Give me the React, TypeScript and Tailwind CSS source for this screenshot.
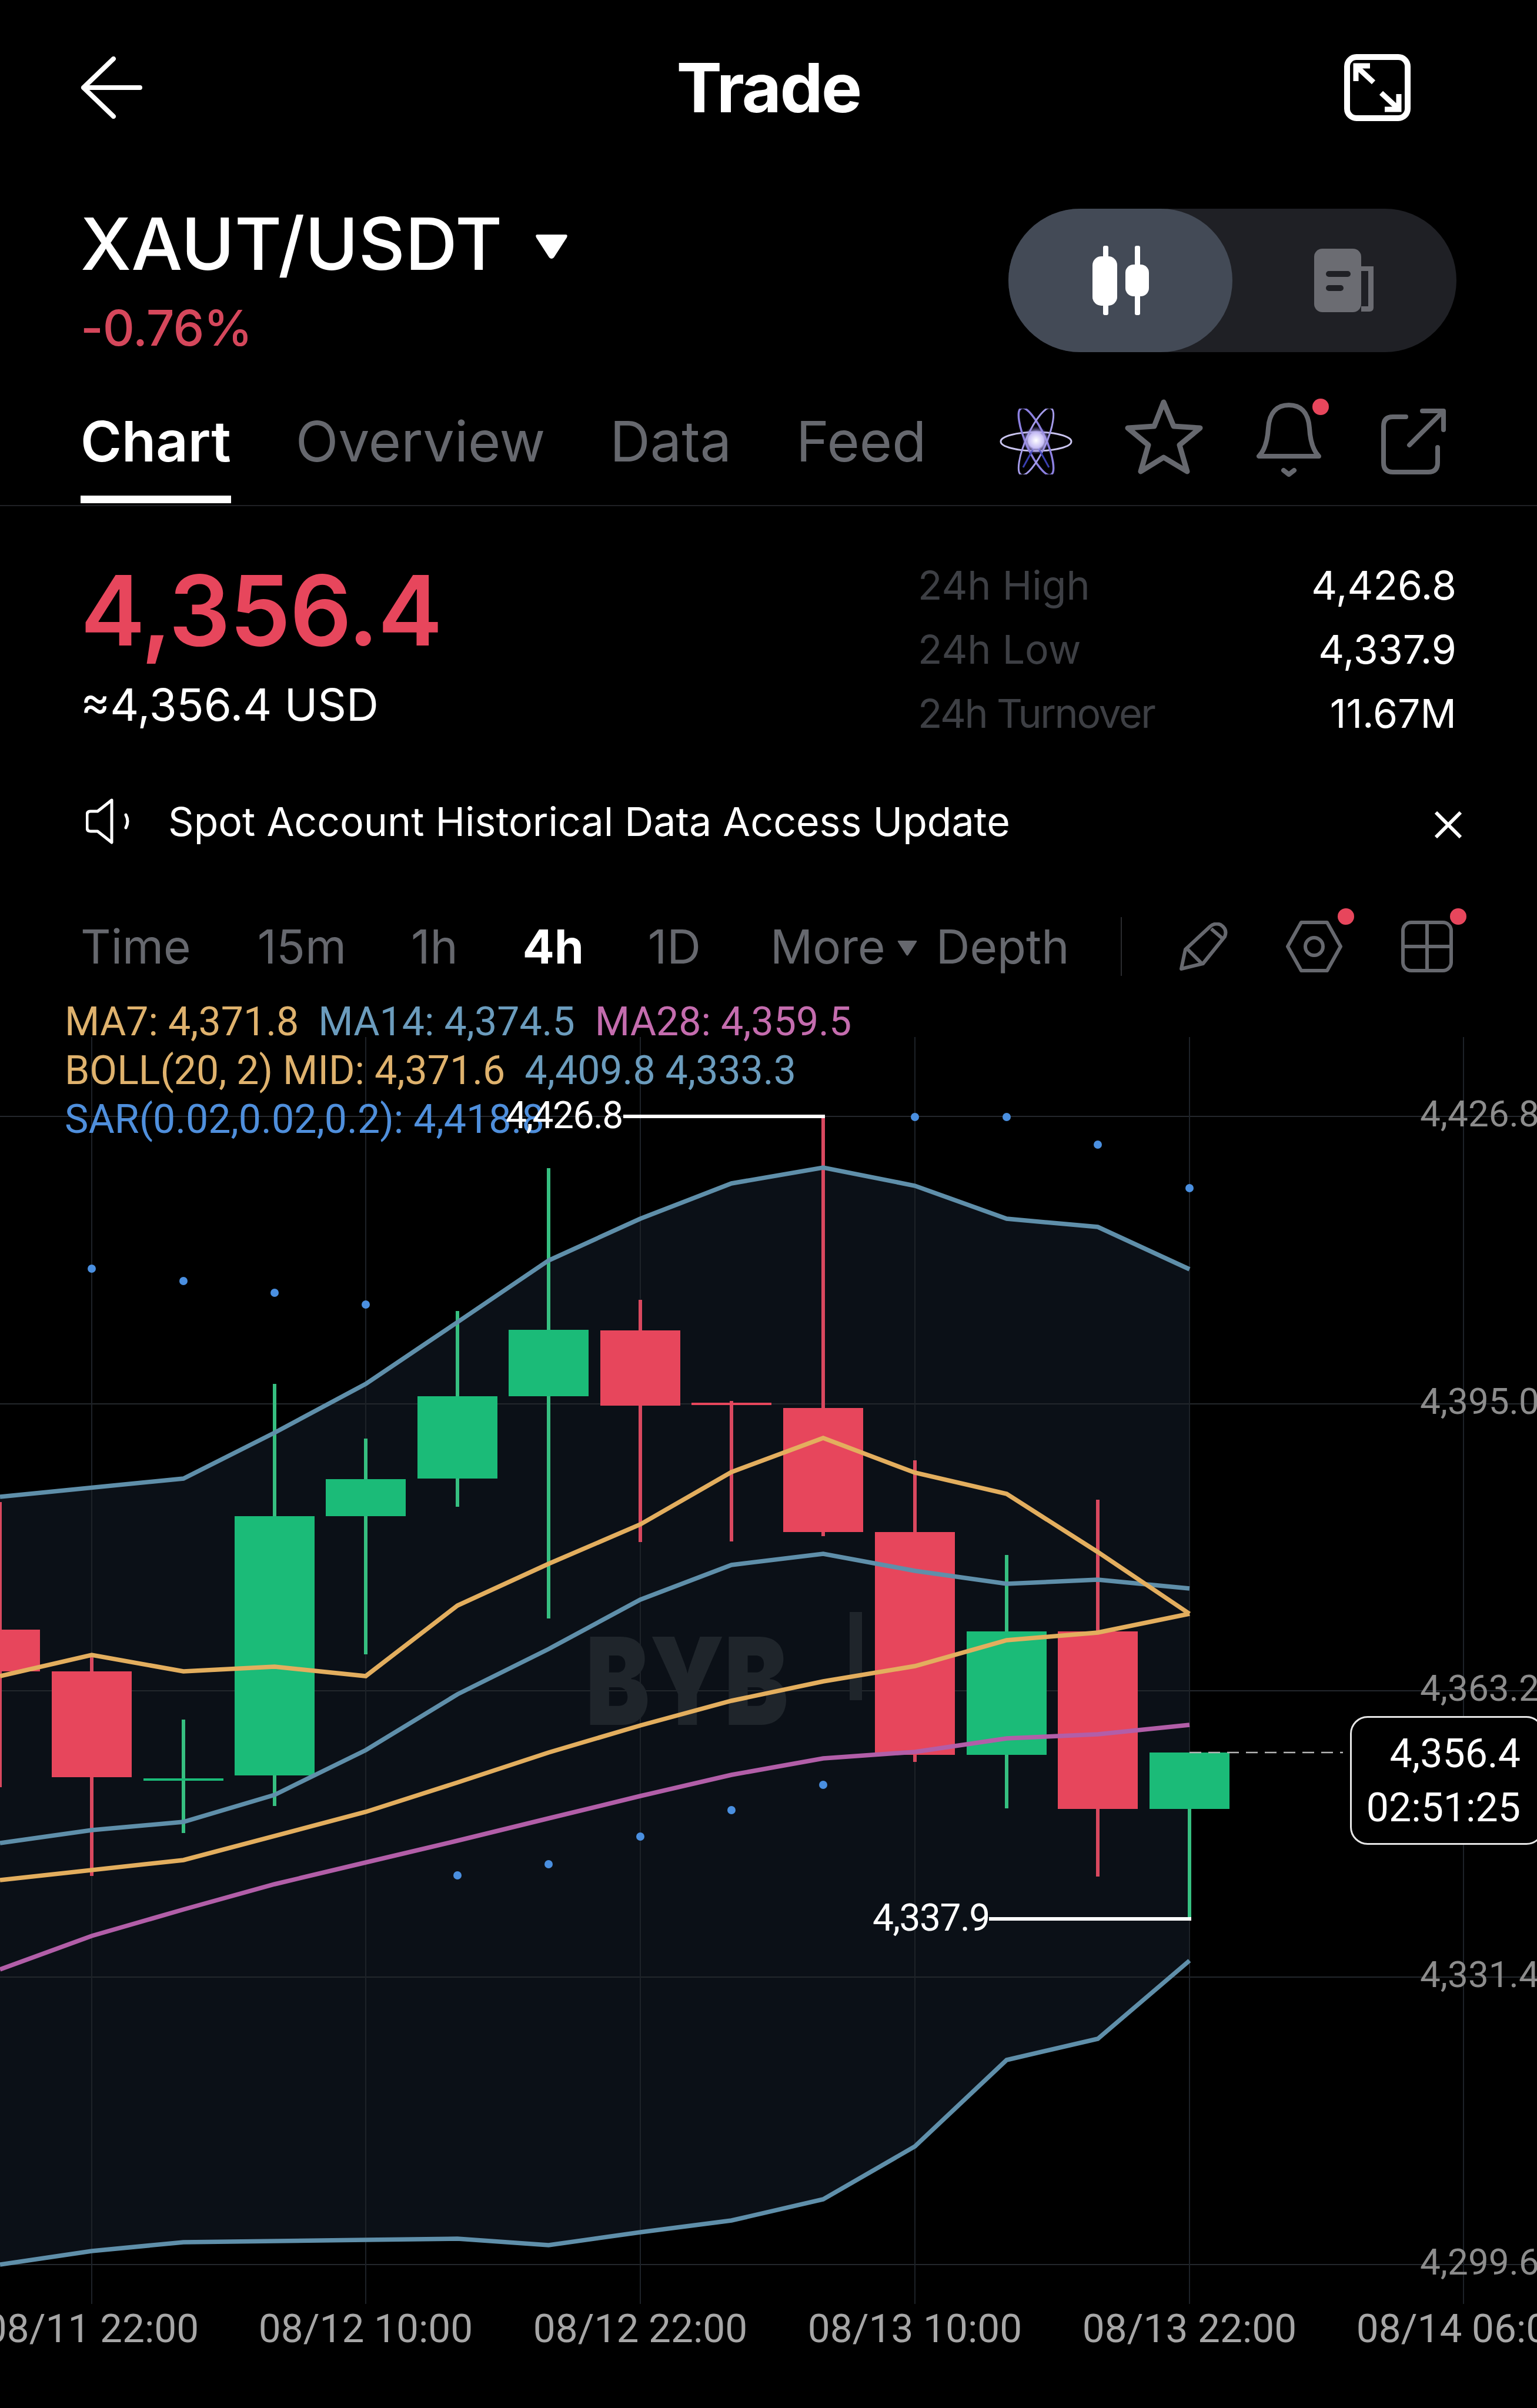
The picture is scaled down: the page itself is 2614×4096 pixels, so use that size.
import React from "react";

const RED = "#e7465c";
const GREEN = "#1bbb78";
const CHART_TOP = 1680;

type Candle = { x: number; o: number; c: number; hi: number; lo: number; up: boolean; w?: number };

// y values are page pixels, so the svg viewBox just starts at CHART_TOP
const candles: Candle[] = [
    { x: 0, o: 2772, c: 2843, hi: 2555, lo: 3040, up: false },
    { x: 156, o: 2843, c: 3023, hi: 2815, lo: 3191, up: false },
    { x: 312, o: 3025, c: 3029, hi: 2925, lo: 3118, up: true },
    { x: 467, o: 2579, c: 3020, hi: 2354, lo: 3072, up: true },
    { x: 622, o: 2516, c: 2579, hi: 2447, lo: 2814, up: true },
    { x: 778, o: 2375, c: 2515, hi: 2230, lo: 2563, up: true },
    { x: 933, o: 2262, c: 2375, hi: 1987, lo: 2753, up: true },
    { x: 1089, o: 2263, c: 2391, hi: 2211, lo: 2623, up: false },
    { x: 1244, o: 2386, c: 2390, hi: 2383, lo: 2622, up: false },
    { x: 1400, o: 2395, c: 2606, hi: 1899, lo: 2613, up: false },
    { x: 1556, o: 2606, c: 2985, hi: 2484, lo: 2997, up: false },
    { x: 1712, o: 2775, c: 2985, hi: 2645, lo: 3076, up: true },
    { x: 1867, o: 2775, c: 3077, hi: 2551, lo: 3192, up: false },
    { x: 2023, o: 2981, c: 3077, hi: 2981, lo: 3264, up: true },
];

const upperBand = [[0, 2546], [312, 2515], [467, 2437], [622, 2354], [778, 2249], [933, 2144], [1089, 2073], [1244, 2013], [1400, 1986], [1556, 2017], [1712, 2073], [1867, 2087], [2023, 2159]];
const lowerBand = [[0, 3852], [156, 3829], [312, 3814], [622, 3810], [778, 3808], [933, 3819], [1089, 3797], [1244, 3777], [1400, 3741], [1556, 3651], [1712, 3504], [1867, 3468], [2023, 3335]];
const ma14 = [[0, 3135], [156, 3113], [312, 3099], [467, 3053], [622, 2977], [778, 2882], [933, 2805], [1089, 2721], [1244, 2662], [1400, 2643], [1556, 2672], [1712, 2694], [1867, 2687], [2023, 2702]];
const ma7 = [[0, 2851], [156, 2815], [312, 2843], [467, 2835], [622, 2851], [778, 2731], [933, 2660], [1089, 2593], [1244, 2504], [1400, 2446], [1556, 2505], [1712, 2541], [1867, 2640], [2023, 2745]];
const bollMid = [[0, 3198], [312, 3164], [622, 3082], [778, 3032], [933, 2981], [1089, 2935], [1244, 2893], [1400, 2860], [1556, 2834], [1712, 2790], [1867, 2777], [2023, 2745]];
const ma28 = [[0, 3350], [156, 3293], [312, 3248], [467, 3205], [622, 3168], [778, 3131], [933, 3093], [1089, 3055], [1244, 3019], [1400, 2991], [1556, 2980], [1712, 2957], [1867, 2950], [2023, 2934]];
const sar = [[156, 2158], [312, 2179], [467, 2199], [622, 2219], [778, 3190], [933, 3171], [1089, 3124], [1244, 3079], [1400, 3036], [1556, 1900], [1712, 1900], [1867, 1947], [2023, 2021]];

const hGrid = [[1899, "4,426.8"], [2388, "4,395.0"], [2876, "4,363.2"], [3363, "4,331.4"], [3852, "4,299.6"]] as const;
const vGrid = [[156, "08/11 22:00"], [622, "08/12 10:00"], [1089, "08/12 22:00"], [1556, "08/13 10:00"], [2023, "08/13 22:00"], [2489, "08/14 06:00"]] as const;

const pts = (p: number[][]) => p.map((q) => q.join(",")).join(" ");

const ChartCanvas = () => (
    <svg className="absolute inset-0" width={2614} height={4096 - CHART_TOP} viewBox={`0 ${CHART_TOP} 2614 ${4096 - CHART_TOP}`}>
        <polygon points={pts([...upperBand, ...[...lowerBand].reverse()])} fill="#0b1017" />
        {hGrid.map(([y]) => <line key={y} x1={0} x2={2614} y1={y} y2={y} stroke="#23272c" strokeWidth={2} />)}
        {vGrid.map(([x]) => <line key={x} x1={x} x2={x} y1={1764} y2={3919} stroke="#1d2228" strokeWidth={2} />)}

        {/* watermark */}
        <text x={996} y={2934} fontFamily="Inter, sans-serif" fontWeight={900} fontSize={206} fill="#1f252b" textLength={345} lengthAdjust="spacingAndGlyphs">BYB</text>
        <rect x={1445} y={2742} width={21} height={150} fill="#1f252b" />

        {candles.map((k) => {
            const color = k.up ? GREEN : RED;
            return (
                <g key={k.x}>
                    <rect x={k.x - 3} y={k.hi} width={6} height={k.lo - k.hi} fill={k.up ? "#36bf80" : "#d9485f"} />
                    <rect x={k.x - 68} y={k.o} width={136} height={k.c - k.o} fill={color} />
                </g>
            );
        })}

        <polyline points={pts(upperBand)} fill="none" stroke="#5f8faa" strokeWidth={7.5} />
        <polyline points={pts(lowerBand)} fill="none" stroke="#5f8faa" strokeWidth={7.5} />
        <polyline points={pts(ma14)} fill="none" stroke="#5f8faa" strokeWidth={7.5} />
        <polyline points={pts(ma28)} fill="none" stroke="#b25ea8" strokeWidth={7.5} />
        <polyline points={pts(bollMid)} fill="none" stroke="#e3ae5e" strokeWidth={7.5} />
        <polyline points={pts(ma7)} fill="none" stroke="#e3ae5e" strokeWidth={7.5} />

        {sar.map(([x, y]) => <circle key={x} cx={x} cy={y} r={7} fill="#4a8fe0" />)}

        {/* high / low markers */}
        <line x1={1060} x2={1403} y1={1899} y2={1899} stroke="#fff" strokeWidth={6} />
        <line x1={1682} x2={2026} y1={3264} y2={3264} stroke="#fff" strokeWidth={6} />
        <line x1={2023} x2={2284} y1={2981} y2={2981} stroke="#b5b5b5" strokeWidth={2.5} strokeDasharray="20 12" />
    </svg>
);

const AtomIcon = () => (
    <svg width={124} height={112} viewBox="0 0 124 112" fill="none">
        <defs>
            <radialGradient id="core">
                <stop offset="0%" stopColor="#ffffff" />
                <stop offset="55%" stopColor="#c6bdf5" />
                <stop offset="100%" stopColor="#6a5cc7" stopOpacity={0} />
            </radialGradient>
        </defs>
        <ellipse cx={62} cy={56} rx={60} ry={16} stroke="#c9c4ef" strokeWidth={3} />
        <ellipse cx={62} cy={56} rx={17} ry={62} stroke="#8c80e0" strokeWidth={3.5} transform="rotate(-24 62 56)" />
        <ellipse cx={62} cy={56} rx={17} ry={62} stroke="#a49bea" strokeWidth={3} transform="rotate(24 62 56)" />
        <path d="M40 100 L62 60 L84 100" stroke="#3a3fb0" strokeWidth={3} />
        <circle cx={62} cy={54} r={24} fill="url(#core)" />
    </svg>
);

const Dot = ({ className }: { className: string }) => (
    <span className={`absolute w-[28px] h-[28px] rounded-full bg-[#e7465c] ${className}`} />
);

export default function App() {
    return (
        <div className="w-[2614px] h-[4096px] bg-black overflow-hidden flex flex-col text-white font-['Inter',sans-serif]">
            {/* top bar */}
            <div className="h-[298px] shrink-0 grid grid-cols-[1fr_auto_1fr] items-center pl-[137px] pr-[137px]">
                <svg width={105} height={106} viewBox="0 0 105 106" fill="none" stroke="#fff" strokeWidth={8} strokeLinecap="round" strokeLinejoin="round">
                    <path d="M56 4 L5 53 L56 102 M5 53 H101" />
                </svg>
                <div className="text-[116px] leading-[130px] font-bold tracking-[-2.6px]">Trade</div>
                <svg className="justify-self-end mr-[78px]" width={113} height={114} viewBox="0 0 113 114" fill="none">
                    <rect x={5} y={5} width={103} height={104} rx={16} stroke="#fff" strokeWidth={10} />
                    <path d="M50 48 L24 24 M20 46 V20 H44" stroke="#fff" strokeWidth={9} />
                    <path d="M63 66 L89 90 M93 68 V94 H69" stroke="#fff" strokeWidth={9} />
                </svg>
            </div>

            {/* symbol + mode switch */}
            <div className="h-[340px] shrink-0 flex justify-between pl-[137px] pr-[137px]">
                <div>
                    <div className="flex items-center mt-[50px]">
                        <span className="text-[123px] leading-[134px] font-medium">XAUT/USDT</span>
                        <svg className="ml-[56px] mt-[8px]" width={56} height={44} viewBox="0 0 56 44"><path d="M4 2 H52 Q56 2 54 7 L32 41 Q28 45 24 41 L2 7 Q0 2 4 2 Z" fill="#fff" /></svg>
                    </div>
                    <div className="text-[84px] leading-[100px] mt-[26px] font-medium tracking-[-1px] text-[#d5475b]">-0.76%</div>
                </div>
                <div className="mt-[57px] w-[762px] h-[244px] rounded-[122px] bg-[#1f2025] flex items-center">
                    <div className="w-[381px] h-[244px] rounded-[122px] bg-[#434a56] flex items-center justify-center">
                        <svg width={96} height={118} viewBox="0 0 96 118" fill="#fff">
                            <rect x={18} y={0} width={9} height={118} rx={3} />
                            <rect x={0} y={18} width={42} height={84} rx={15} />
                            <rect x={72} y={0} width={9} height={118} rx={3} />
                            <rect x={56} y={32} width={40} height={54} rx={14} />
                        </svg>
                    </div>
                    <div className="flex-1 flex items-center justify-center">
                        <svg width={104} height={108} viewBox="0 0 104 108" fill="none">
                            <rect x={0} y={0} width={80} height={108} rx={14} fill="#6b6c72" />
                            <path d="M80 30 H101 V100 Q101 107 94 107 H80 V98 H92 V38 H80 Z" fill="#6b6c72" />
                            <rect x={20} y={38} width={42} height={10} rx={5} fill="#1f2025" />
                            <rect x={20} y={62} width={30} height={10} rx={5} fill="#1f2025" />
                        </svg>
                    </div>
                </div>
            </div>

            {/* tabs */}
            <div className="h-[223px] shrink-0 border-b-2 border-[#1f2024] flex pl-[137px] pr-[155px] text-[95px] leading-[110px]">
                <div className="relative pt-[58px]">
                    <span className="font-semibold">Chart</span>
                    <span className="absolute left-0 right-0 bottom-[3px] h-[13px] bg-white" />
                </div>
                <div className="pt-[58px] ml-[110px] text-[#66686e]">Overview</div>
                <div className="pt-[58px] ml-[110px] text-[#66686e]">Data</div>
                <div className="pt-[58px] ml-[110px] text-[#66686e]">Feed</div>
                <div className="ml-auto flex items-start pt-[40px]">
                    <div className="mt-[17px]"><AtomIcon /></div>
                    <svg className="ml-[89px]" width={133} height={130} viewBox="0 0 133 130" fill="none" stroke="#66686e" strokeWidth={9} strokeLinejoin="round">
                        <path d="M66 6 L83 47 L128 50 L93 79 L106 124 L66 100 L27 124 L40 79 L5 50 L50 47 Z" />
                    </svg>
                    <div className="relative ml-[91px]">
                        <svg width={110} height={134} viewBox="0 0 110 134" fill="none" stroke="#66686e" strokeWidth={8} strokeLinecap="round" strokeLinejoin="round">
                            <path d="M4 98 H106 Q92 84 90 50 C88 22 74 11 55 11 C36 11 22 22 20 50 Q18 84 4 98 Z" />
                            <path d="M46 122 L55 129 L64 122" />
                        </svg>
                        <Dot className="right-[-13px] top-[0px]" />
                    </div>
                    <svg className="ml-[102px] mt-[17px]" width={110} height={112} viewBox="0 0 110 112" fill="none" stroke="#66686e" strokeWidth={8} strokeLinecap="round" strokeLinejoin="round">
                        <path d="M42 14 H20 Q4 14 4 30 V92 Q4 108 20 108 H80 Q96 108 96 92 V66" />
                        <path d="M48 62 L105 5 M70 4 H106 V36" />
                    </svg>
                </div>
            </div>

            {/* price + 24h stats */}
            <div className="h-[429px] shrink-0 flex justify-between pl-[137px] pr-[137px]">
                <div className="pt-[87px]">
                    <div className="text-[165px] leading-[180px] font-semibold tracking-[-1.5px] text-[#e7465c]">4,356.4</div>
                    <div className="text-[76px] leading-[90px] mt-[25px]">≈4,356.4 USD</div>
                </div>
                <div className="w-[916px] pt-[80px] text-[68px] leading-[109px]">
                    <div className="flex justify-between">
                        <span className="text-[#3d3f44]">24h High</span>
                        <span>4,426.8</span>
                    </div>
                    <div className="flex justify-between">
                        <span className="text-[#3d3f44]">24h Low</span>
                        <span>4,337.9</span>
                    </div>
                    <div className="flex justify-between">
                        <span className="text-[#3d3f44] tracking-[-2.4px]">24h Turnover</span>
                        <span>11.67M</span>
                    </div>
                </div>
            </div>

            {/* announcement */}
            <div className="h-[214px] shrink-0 flex items-center pl-[146px] pr-[127px]">
                <svg width={76} height={78} viewBox="0 0 76 78" fill="none" stroke="#fff" strokeWidth={5} strokeLinejoin="round">
                    <path d="M44 3 L20 22 H8 Q2 22 2 28 V50 Q2 56 8 56 H20 L44 75 Z" />
                    <path d="M68 28 Q74 39 68 50" strokeLinecap="round" />
                </svg>
                <div className="ml-[64px] text-[68px] leading-[80px]">Spot Account Historical Data Access Update</div>
                <svg className="ml-auto mt-[12px]" width={48} height={46} viewBox="0 0 48 46" fill="none" stroke="#fff" strokeWidth={6}>
                    <path d="M3 2 L45 44 M45 2 L3 44" />
                </svg>
            </div>

            {/* intervals */}
            <div className="h-[176px] shrink-0 pt-[36px] pl-[137px] pr-[140px]">
                <div className="h-[140px] flex items-center text-[80px] leading-[96px] text-[#66686e]">
                    <span>Time</span>
                    <span className="ml-[113px]">15m</span>
                    <span className="ml-[110px]">1h</span>
                    <span className="ml-[110px] font-bold text-white">4h</span>
                    <span className="ml-[109px]">1D</span>
                    <span className="ml-[118px]">More</span>
                    <svg className="ml-[20px] mt-[6px]" width={34} height={26} viewBox="0 0 34 26"><path d="M2 0 H32 Q34 0 33 2 L19 24 Q17 27 15 24 L1 2 Q0 0 2 0 Z" fill="#66686e" /></svg>
                    <span className="ml-[32px]">Depth</span>
                    <span className="ml-[87px] w-[2px] h-[100px] bg-[#2a2b2f]" />
                    <svg className="ml-[98px]" width={82} height={82} viewBox="0 0 82 82" fill="none" stroke="#66686e" strokeWidth={6} strokeLinejoin="round">
                        <path d="M52 7 Q60 0 70 4 Q82 12 77 24 L40 70 L3 79 L10 46 Z" />
                        <path d="M54 11 L75 29 M12 44 L38 70" />
                    </svg>
                    <div className="relative ml-[99px]">
                        <svg width={96} height={88} viewBox="0 0 96 88" fill="none" stroke="#66686e" strokeWidth={6} strokeLinejoin="round">
                            <path d="M26 3 H70 L93 44 L70 85 H26 L3 44 Z" />
                            <circle cx={48} cy={44} r={15} />
                        </svg>
                        <Dot className="right-[-20px] top-[-21px]" />
                    </div>
                    <div className="relative ml-[100px]">
                        <svg width={88} height={88} viewBox="0 0 88 88" fill="none" stroke="#66686e" strokeWidth={6}>
                            <rect x={3} y={3} width={82} height={82} rx={14} />
                            <path d="M44 3 V85 M3 44 H85" />
                        </svg>
                        <Dot className="right-[-23px] top-[-21px]" />
                    </div>
                </div>
            </div>

            {/* chart */}
            <div className="relative flex-1 font-['Roboto',sans-serif]">
                <ChartCanvas />

                <div className="absolute left-[110px] top-[17px] text-[68px] leading-[83px]">
                    <div className="flex">
                        <span className="text-[#dfb26d]">MA7: 4,371.8</span>
                        <span className="ml-[33px] text-[#6b9cbd]">MA14: 4,374.5</span>
                        <span className="ml-[34px] text-[#c46cae]">MA28: 4,359.5</span>
                    </div>
                    <div className="flex">
                        <span className="text-[#dfb26d]">BOLL(20, 2) MID: 4,371.6</span>
                        <span className="ml-[33px] text-[#6b9cbd]">4,409.8 4,333.3</span>
                    </div>
                    <div className="text-[#4f8fdc]">SAR(0.02,0.02,0.2): 4,418.8</div>
                </div>

                <span className="absolute left-[860px] top-[181px] text-[64px] leading-[74px] tracking-[-1.5px]">4,426.8</span>
                <span className="absolute left-[1484px] top-[1546px] text-[64px] leading-[74px] tracking-[-1.5px]">4,337.9</span>

                {hGrid.map(([y, label]) => (
                    <span key={y} className="absolute left-[2415px] text-[62px] leading-[72px] text-[#8c8c8c]" style={{ top: y - CHART_TOP - 40 }}>{label}</span>
                ))}
                {vGrid.map(([x, label]) => (
                    <span key={x} className="absolute top-[2243px] w-[420px] text-center text-[67.5px] leading-[76px] text-[#a6a6a6]" style={{ left: x - 210 }}>{label}</span>
                ))}

                <div className="absolute left-[2296px] top-[1239px] w-[330px] h-[219px] rounded-[30px] border-[3px] border-[#e6e6e6] bg-black pr-[37px] flex flex-col justify-center items-end text-[68px] leading-[92px]">
                    <span>4,356.4</span>
                    <span>02:51:25</span>
                </div>
            </div>
        </div>
    );
}
